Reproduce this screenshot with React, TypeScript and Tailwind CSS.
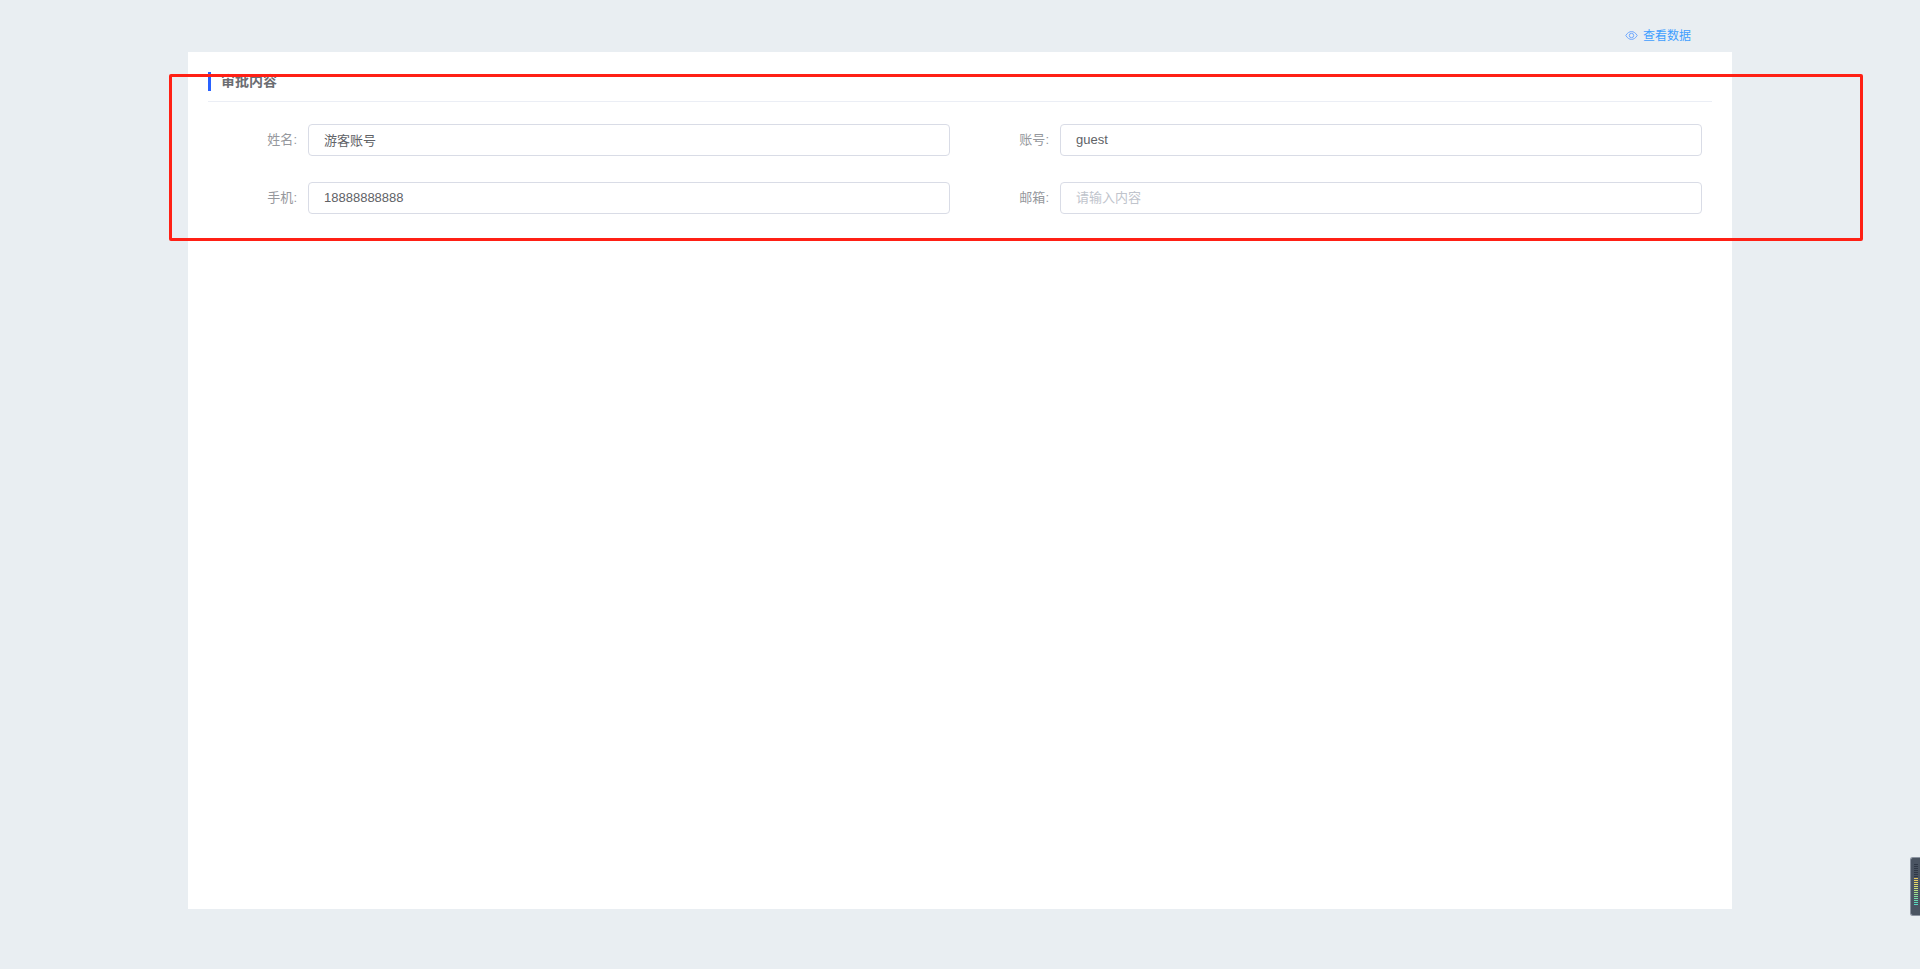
const fields = [
  { label: "姓名", value: "游客账号" },
  { label: "账号", value: "guest" },
  { label: "手机", value: "18888888888" },
  { label: "邮箱", value: "" },
];

const meterBars = [
  "#2f3846", "#2f3846", "#2f3846", "#2f3846", "#2f3846", "#2f3846", "#2f3846",
  "#e8c75a", "#e8d060", "#e6d866", "#e0dc6c", "#d6de72", "#c8e078", "#b8e080",
  "#a8e088", "#96de92", "#86de9c", "#76dca6", "#68dab0", "#5cd8ba", "#56d8c2",
];

function Field({ label, value }: { label: string; value: string }) {
  return (
    <div className="flex items-center">
      <label className="w-[110px] shrink-0 pr-[11px] text-right text-[13px] text-[#96989d]">{label}:</label>
      <input
        type="text"
        readOnly
        value={value}
        placeholder="请输入内容"
        className="h-[32px] w-full min-w-0 rounded border border-[#d9dce6] bg-white px-[15px] pb-[2px] text-[13px] text-[#606266] outline-none placeholder:text-[#c0c4cc]"
      />
    </div>
  );
}

export default function App() {
  return (
    <div className="relative h-[969px] overflow-hidden bg-[#e9eef2] font-['Liberation_Sans','Noto_Sans_CJK_SC',sans-serif]">
      <div className="flex h-[52px] items-center justify-end gap-[5px] pr-[229px] pt-[19px] text-[12px] text-[#409eff]">
        <svg width="13" height="13" viewBox="0 0 13 13" fill="none" stroke="#6fa8ff" strokeWidth="1">
          <path d="M0.8 6.5C2.6 3.6 4.6 2.6 6.5 2.6S10.4 3.6 12.2 6.5C10.4 9.4 8.4 10.4 6.5 10.4S2.6 9.4 0.8 6.5Z" />
          <circle cx="6.5" cy="6.5" r="2.2" />
        </svg>
        <span>查看数据</span>
      </div>

      <div className="mx-[188px] h-[857px] bg-white px-[20px] pt-[20px]">
        <div className="border-b border-[#ebeef5] pb-[10px]">
          <h2 className="border-l-[3px] border-[#2962ff] pl-[10px] text-[14px] font-bold leading-[19px] text-[#6b6d72]">
            审批内容
          </h2>
        </div>
        <div className="-ml-[10px] mr-[10px] grid grid-cols-2 gap-y-[26px] pt-[22px]">
          {fields.map((f) => (
            <Field key={f.label} label={f.label} value={f.value} />
          ))}
        </div>
      </div>

      {/* annotation drawn over the page */}
      <div className="pointer-events-none absolute left-[169px] top-[74px] h-[167px] w-[1694px] rounded-[2px] border-[3px] border-[#ff2015]" />

      {/* side widget */}
      <div className="absolute right-0 top-[857px] flex h-[59px] w-[10px] flex-col items-end gap-[1px] rounded-l-[3px] border border-r-0 border-[#8b93a0] bg-[#4a5462] pr-[2px] pt-[6px]">
        {meterBars.map((c, i) => (
          <div key={i} className="h-[1px] w-[4px] shrink-0" style={{ backgroundColor: c }} />
        ))}
      </div>
    </div>
  );
}
